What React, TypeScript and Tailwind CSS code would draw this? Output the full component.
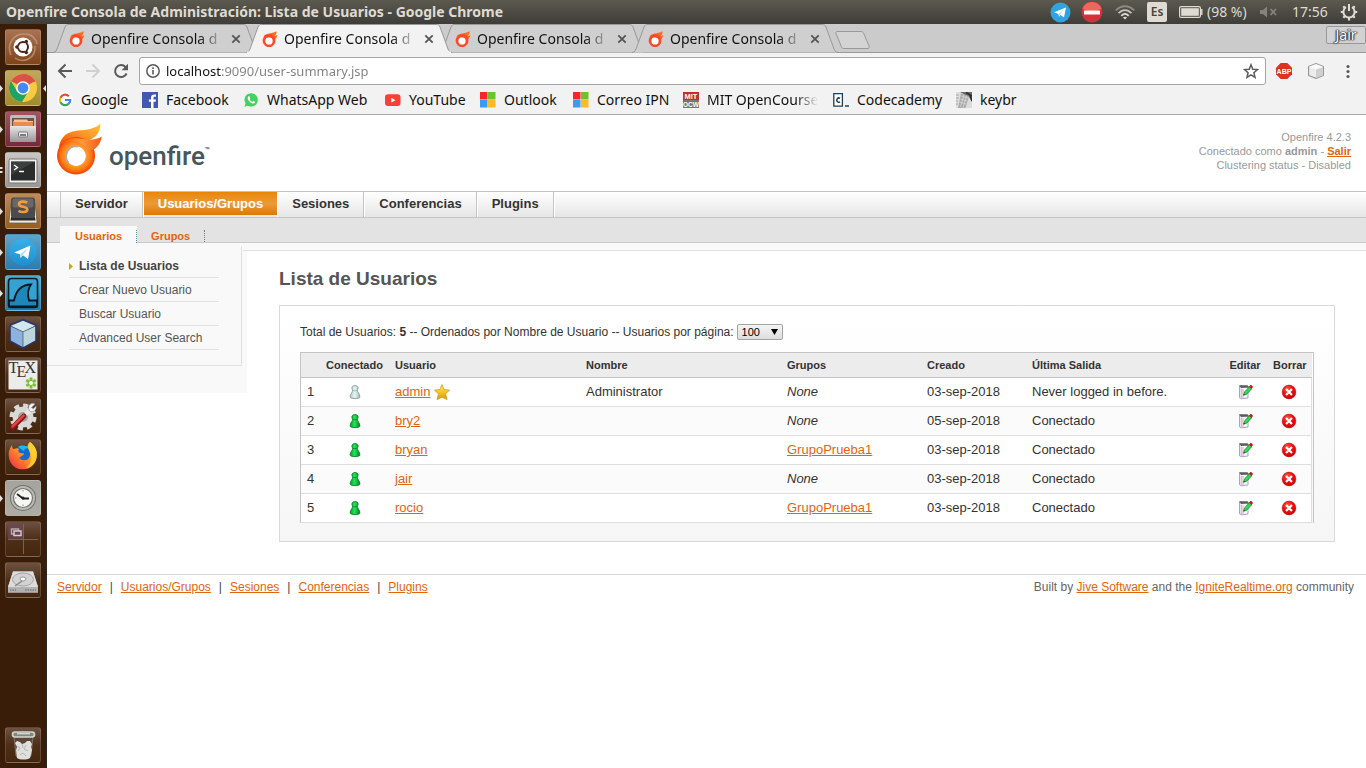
import type { ReactNode } from "react";

const UI = "font-['Noto_Sans',sans-serif]";

function Defs() {
  return (
    <svg className="absolute h-0 w-0" aria-hidden="true">
      <defs>
        <radialGradient id="fire" cx="0.5" cy="0.5" r="0.52">
          <stop offset="0.45" stopColor="#ffa63a" />
          <stop offset="0.75" stopColor="#ff7a14" />
          <stop offset="1" stopColor="#ee3600" />
        </radialGradient>
        <linearGradient id="flame" x1="0" y1="1" x2="1" y2="0">
          <stop offset="0" stopColor="#f24a00" />
          <stop offset="0.55" stopColor="#ff9226" />
          <stop offset="1" stopColor="#ffc62e" />
        </linearGradient>
        <linearGradient id="flameLow" x1="0" y1="0" x2="1" y2="0">
          <stop offset="0" stopColor="#ff5a0c" />
          <stop offset="0.5" stopColor="#ff9a3a" />
          <stop offset="1" stopColor="#f4581a" />
        </linearGradient>
        <linearGradient id="pawnOn" x1="0" x2="1">
          <stop offset="0" stopColor="#0b9a2c" />
          <stop offset="0.45" stopColor="#22e457" />
          <stop offset="1" stopColor="#088424" />
        </linearGradient>
        <linearGradient id="pawnOff" x1="0" x2="1">
          <stop offset="0" stopColor="#b4cccc" />
          <stop offset="0.5" stopColor="#e4f6f6" />
          <stop offset="1" stopColor="#a4b6b6" />
        </linearGradient>
        <linearGradient id="gold" x1="0" y1="0" x2="0" y2="1">
          <stop offset="0" stopColor="#ffef7a" />
          <stop offset="0.5" stopColor="#f4c522" />
          <stop offset="1" stopColor="#d89a10" />
        </linearGradient>
        <radialGradient id="redBall" cx="0.4" cy="0.3" r="0.75">
          <stop offset="0" stopColor="#ff5a4a" />
          <stop offset="0.5" stopColor="#f60c0c" />
          <stop offset="1" stopColor="#c80000" />
        </radialGradient>
        <linearGradient id="metal" x1="0" y1="0" x2="0" y2="1">
          <stop offset="0" stopColor="#e6e6e6" />
          <stop offset="1" stopColor="#969696" />
        </linearGradient>
        <linearGradient id="foxTail" x1="1" y1="0" x2="0" y2="1">
          <stop offset="0" stopColor="#ffe53b" />
          <stop offset="0.45" stopColor="#ff9a1f" />
          <stop offset="1" stopColor="#f0234f" />
        </linearGradient>
        <linearGradient id="tgBlue" x1="0" y1="0" x2="0" y2="1">
          <stop offset="0" stopColor="#38b0e8" />
          <stop offset="1" stopColor="#1f8fd0" />
        </linearGradient>
      </defs>
    </svg>
  );
}

/* ---------- system bar ---------- */

function SystemBar() {
  return (
    <header className={`${UI} flex h-6 items-center justify-between bg-linear-to-b from-[#5c594f] to-[#3e3d38] pr-2 pl-1.5 text-[#dfdbd2]`}>
      <h1 className="text-[14px] leading-6 font-bold">Openfire Consola de Administración: Lista de Usuarios - Google Chrome</h1>
      <div className="flex items-center text-[14px] leading-6">
        <svg className="mr-2.5 size-[21px]" viewBox="0 0 21 21" aria-hidden="true">
          <circle cx="10.500" cy="10.500" r="10" fill="#2ca5e0" />
          <path d="M4 10.300 16 5.600 14 15.500 10.600 13 9 14.800 8.500 11.900Z" fill="#fff" />
          <path d="M8.500 11.900 14 7.600 9.800 12.500 9 14.800Z" fill="#b8dcf0" />
        </svg>
        <svg className="mr-3 size-[22px]" viewBox="0 0 22 22" aria-hidden="true">
          <circle cx="11" cy="11" r="10.500" fill="#d6303a" />
          <path d="M1.500 8a10 10 0 0 1 19 0c-6 2-13 2-19 0Z" fill="#ef7d68" opacity="0.75" />
          <rect x="3" y="9.500" width="16" height="4" fill="#fff" />
        </svg>
        <svg className="mr-3 h-[15px] w-5" viewBox="0 0 20 15" fill="none" strokeWidth="1.800" aria-hidden="true">
          <path d="M.8 5.500C6-.2 14-.2 19.200 5.500" stroke="#8d8a82" />
          <path d="M3.600 8.200C7.500 4 12.500 4 16.400 8.200" stroke="#c8c4bb" />
          <path d="M6.300 10.800c2.400-2.500 5-2.500 7.400 0" stroke="#dfdbd2" />
          <path d="M8 12.600c1.300-1.300 2.700-1.300 4 0L10 14.600Z" fill="#dfdbd2" />
        </svg>
        <span className="mr-3 flex size-5 items-center justify-center rounded-[2px] bg-[#dfdbd2] text-[12px] font-semibold text-[#45443e]">Es</span>
        <svg className="mr-1 h-3 w-6" viewBox="0 0 24 12" fill="none" aria-hidden="true">
          <rect x=".6" y=".6" width="20.800" height="10.800" rx="1.500" stroke="#dfdbd2" strokeWidth="1.200" />
          <rect x="2.200" y="2.200" width="17.600" height="7.600" fill="#dfdbd2" />
          <path d="M22.800 3v6" stroke="#dfdbd2" strokeWidth="1.400" />
        </svg>
        <span className="w-[52px] whitespace-nowrap">(98 %)</span>
        <svg className="mr-3.5 h-3 w-[19px]" viewBox="0 0 19 12" fill="#86837a" aria-hidden="true">
          <path d="M1 4h3l4-3.500v11L4 8H1Z" />
          <path d="m11.500 3 5.500 6M17 3l-5.500 6" stroke="#86837a" strokeWidth="1.800" />
        </svg>
        <time className="w-12">17:56</time>
        <svg className="size-[18px]" viewBox="0 0 18 18" fill="none" stroke="#dfdbd2" aria-hidden="true">
          <path d="M6 4.200a5.600 5.600 0 1 0 6 0" strokeWidth="2" />
          <path d="M9 1v7" strokeWidth="2" />
          <path d="M3.300 3.300l1.800 1.800M14.700 3.300l-1.800 1.800M.8 9h2.600M17.200 9h-2.600M3.300 14.700l1.800-1.800M14.700 14.700l-1.800-1.800M9 17.500v-3" strokeWidth="2.200" />
        </svg>
      </div>
    </header>
  );
}

/* ---------- launcher ---------- */

type Launcher = { name: string; tile: string; running?: number; active?: boolean; art: ReactNode };

const plain = "bg-linear-to-b from-[#6d5240] via-[#4d2f18] to-[#45260d]";

const launchers: Launcher[] = [
  {
    name: "Ubuntu",
    tile: "bg-linear-to-b from-[#a87354] to-[#7f4518]",
    art: (
      <>
        <path d="M6 26C1 15 9 4 20 5c7 0 11 5 12 10M10 29c9 6 21 0 20-12" fill="none" stroke="#d2ab92" strokeWidth="1.500" opacity="0.6" />
        <circle cx="18" cy="18" r="9.500" fill="#fff" />
        <circle cx="18" cy="18" r="5" fill="none" stroke="#4a2414" strokeWidth="2" />
        <path d="M18 18h-8M18 18l4-7M18 18l4 7" stroke="#fff" strokeWidth="1" />
        <circle cx="11.800" cy="18" r="1.700" fill="#4a2414" />
        <circle cx="21.300" cy="12.500" r="1.700" fill="#4a2414" />
        <circle cx="21.300" cy="23.500" r="1.700" fill="#4a2414" />
      </>
    ),
  },
  {
    name: "Google Chrome",
    tile: "bg-linear-to-b from-[#c0a95e] to-[#a08b2c]",
    running: 1,
    active: true,
    art: (
      <>
        <circle cx="18" cy="18" r="14" fill="#f7cb3f" />
        <path d="M18 18 5.900 11A14 14 0 0 1 30.100 11Z" fill="#dd5144" />
        <path d="M18 4A14 14 0 0 1 30.500 11.700H18Z" fill="#dd5144" />
        <path d="M5.900 11A14 14 0 0 0 17 32L23.500 21 12 21Z" fill="#1da362" />
        <circle cx="18" cy="18" r="6.800" fill="#fff" />
        <circle cx="18" cy="18" r="5.400" fill="#4587f3" />
      </>
    ),
  },
  {
    name: "Archivos",
    tile: "bg-linear-to-b from-[#a05560] to-[#782838]",
    running: 1,
    art: (
      <>
        <rect x="5" y="4" width="26" height="27" rx="2" fill="#bdbdbd" />
        <rect x="7" y="7" width="22" height="8" fill="#6b5148" />
        <path d="M8 10h20v5H8Z" fill="#ed8b4b" />
        <path d="M9 8.500h13l1 1.500h5v1H9Z" fill="#ffc193" />
        <rect x="5" y="15" width="26" height="16" rx="1" fill="url(#metal)" />
        <rect x="13.500" y="21" width="9" height="5" rx="1" fill="#eee" stroke="#777" />
        <path d="M15 24h6" stroke="#555" strokeWidth="1.500" />
      </>
    ),
  },
  {
    name: "Terminal",
    tile: "bg-linear-to-b from-[#c9c6c3] to-[#9a9793]",
    running: 2,
    art: (
      <>
        <rect x="4" y="7" width="28" height="24" rx="1.500" fill="#efefef" stroke="#777" />
        <rect x="6" y="9.500" width="24" height="19" fill="#2a2c2b" />
        <path d="M6 9.500h24L6 23Z" fill="#4a4c4b" opacity="0.6" />
        <path d="m9 13 3.500 2.500L9 18M14 19.500h5" stroke="#fff" strokeWidth="1.400" fill="none" />
      </>
    ),
  },
  {
    name: "Sublime Text",
    tile: "bg-linear-to-b from-[#bd8a5b] to-[#95601f]",
    running: 1,
    art: (
      <>
        <path d="M6 10h24l2 18.500c0 1-.5 1.500-1.500 1.500h-25C4.500 30 4 29.500 4 28.500Z" fill="#efe9e2" stroke="#6d5a48" strokeWidth=".8" />
        <path d="M6 24h24l.5 3.500h-25Z" fill="#2c2c2c" />
        <rect x="6" y="4.500" width="24" height="20.500" rx="2.500" fill="#4b4b4b" />
        <rect x="7.500" y="5.500" width="21" height="9" rx="2" fill="#686868" />
        <path d="M22.300 9.700c-3-1.700-8.300-1.600-8.300 1.500 0 3.300 8.300 2 8.300 5.300 0 3.100-6 3.100-8.800 1.400" fill="none" stroke="#f59a3a" strokeWidth="2.600" />
      </>
    ),
  },
  {
    name: "Telegram",
    tile: "bg-linear-to-b from-[#5fa3c8] to-[#2b7cae]",
    running: 1,
    art: (
      <>
        <circle cx="18" cy="18" r="13.500" fill="url(#tgBlue)" />
        <path d="M9 18.500 25.500 11.500 23 25 17.800 21.300 15.600 24 15 20.300Z" fill="#fff" />
        <path d="m15 20.300 8-6.300-5.200 7.300-2.200 2.700Z" fill="#bcdcee" />
      </>
    ),
  },
  {
    name: "Wireshark",
    tile: "bg-linear-to-b from-[#4faed6] to-[#1b7cae]",
    running: 1,
    art: (
      <>
        <rect x="3.500" y="3.500" width="29" height="29" rx="3" fill="#35a2d2" stroke="#0d1c26" strokeWidth="1.600" />
        <path d="M4 25.500h5C11 15 16 9.800 26 9.500c-3.500 4.500-3.500 10-2 16h8v6H4Z" fill="#1f86ba" stroke="#0b1820" strokeWidth="1.800" />
      </>
    ),
  },
  {
    name: "VirtualBox",
    tile: plain,
    art: (
      <>
        <path d="M18 4 30.500 9.500V25L18 32 5.500 25V9.500Z" fill="#26407f" stroke="#24357c" strokeWidth="2.500" strokeLinejoin="round" opacity="0.8" />
        <path d="M18 4.800 30 9.800 18 15.500 6 9.800Z" fill="#d3e8ec" />
        <path d="M5.800 10.500 17.700 16v15l-11.900-6.500Z" fill="#8fb2dc" />
        <path d="M30.200 10.500 18.300 16v15l11.900-6.500Z" fill="#bcd6dc" />
      </>
    ),
  },
  {
    name: "TeXstudio",
    tile: plain,
    art: (
      <>
        <rect x="3.500" y="3.500" width="29" height="29" fill="#ececec" />
        <g fill="#333" fontFamily="Liberation Serif, serif" fontSize="16">
          <text x="3.500" y="15.500">T</text>
          <text x="11.500" y="20">E</text>
          <text x="19.500" y="15.500">X</text>
        </g>
        <circle cx="26" cy="26" r="5.500" fill="#d4e8b8" />
        <path d="M26 20.500v11M21.300 23.200l9.400 5.600M30.700 23.200l-9.400 5.600" stroke="#80bc3c" strokeWidth="2.600" />
        <circle cx="26" cy="26" r="2" fill="#fff" />
      </>
    ),
  },
  {
    name: "Configuración",
    tile: plain,
    art: (
      <>
        <circle cx="18" cy="19" r="10.500" fill="#d9d9d6" />
        <circle cx="18" cy="19" r="11.500" fill="none" stroke="#d9d9d6" strokeWidth="4" strokeDasharray="5 4" />
        <circle cx="18" cy="19" r="5" fill="#a5a29e" />
        <path d="M17 20 26 11" stroke="#e9e9e9" strokeWidth="4" />
        <path d="M24 12c-2-5 3-8 6-6l-3.500 3.500 1.500 1.700L31 8c1 4-3 7-6.500 5Z" fill="#f4f4f4" stroke="#888" strokeWidth=".6" />
        <path d="M7.500 29.500 19 18" stroke="#8e1717" strokeWidth="5" strokeLinecap="round" />
        <path d="M7.500 28.500 18.500 17.700" stroke="#e14545" strokeWidth="2.500" strokeLinecap="round" />
      </>
    ),
  },
  {
    name: "Firefox",
    tile: plain,
    art: (
      <>
        <circle cx="19" cy="17" r="10.500" fill="#1769d2" />
        <path d="M13 8c3-2 8-2 11 1-3 0-5 1-5 3Z" fill="#27b4f2" />
        <path d="M7 6c0 3 1 4 2 4 2-1 4-1 5 0-1 2-1 3 1 4l4 .5c0 2-4 3-4.500 4.500 2 3 8 3 9.500 0 2-3 1-7-1-9.500-1-3 0-5 2-6.500 5 4 8 9 6.500 16A14 14 0 0 1 4 19C3 14 4 10 7 6Z" fill="url(#foxTail)" />
        <path d="M25 3c5 4 8 9 6.500 16C30 25 26 29 21 29c5-4 7-10 3-18-1-3-1-6 1-8Z" fill="#ffd42e" opacity="0.75" />
      </>
    ),
  },
  {
    name: "Reloj",
    tile: "bg-linear-to-b from-[#a5a39d] to-[#aeaca4]",
    running: 1,
    art: (
      <>
        <circle cx="18" cy="18" r="13" fill="#6f716c" />
        <circle cx="18" cy="18" r="12" fill="#babcb6" />
        <circle cx="18" cy="18" r="9.500" fill="#f6f6f2" stroke="#73756f" strokeWidth="1.200" />
        <path d="m12 14 6 4.500h6" fill="none" stroke="#222" strokeWidth="1.800" />
        <circle cx="18" cy="18" r="1.500" fill="#222" />
        <path d="M18 10v1.500M18 24.500V26M10 18h1.500" stroke="#888" />
      </>
    ),
  },
  {
    name: "Áreas de trabajo",
    tile: plain,
    art: (
      <>
        <rect x="3" y="3" width="15" height="15" fill="#6a4657" opacity="0.7" />
        <path d="M18.500 3v30M3 18.500h30" stroke="#7b6252" strokeWidth="1" />
        <path d="M6.500 8h7v5h-7Z" fill="none" stroke="#b7a8ad" strokeWidth="1.400" />
        <path d="M9 10h7v4.500H9Z" fill="#6a4657" stroke="#d8cdd0" strokeWidth="1.400" />
      </>
    ),
  },
  {
    name: "Disco",
    tile: plain,
    art: (
      <>
        <path d="M8 9.500h20L33 25v5.500H3V25Z" fill="#c6c6c6" />
        <path d="M8 9.500h20L33 25H3Z" fill="#dcdcdc" />
        <ellipse cx="18" cy="17.500" rx="10.500" ry="6.500" fill="#d2d2d2" stroke="#a5a5a5" />
        <ellipse cx="18" cy="17" rx="3" ry="2" fill="#fff" stroke="#999" />
        <path d="m10 24 7-5" stroke="#888" strokeWidth="1.500" />
        <path d="M3 25h30v5.500H3Z" fill="#b1b1b1" />
        <path d="M20 28h11M5 28h6" stroke="#7d7d7d" strokeWidth="1.500" strokeDasharray="1.500 1" />
      </>
    ),
  },
];

const trash: Launcher = {
  name: "Papelera",
  tile: plain,
  art: (
    <>
      <path d="M9 9h19l-2 20a8 3 0 0 1-15 0Z" fill="#5c4536" stroke="#8d7d72" strokeWidth=".8" />
      <path d="m10 16 2-2 3 1 2 2 3-1 2-2 3 0 2 3-1 3 1 3-2 8c-3 2-10 2-13 0l-1-8 1-3Z" fill="#dfe0dd" />
      <path d="m12 19 3 2-2 3M21 18l-2 4 4 2M15 28l3-2 3 3M17 17l1 4" fill="none" stroke="#b4b6b2" />
      <rect x="7.500" y="5" width="22" height="5" rx="2.500" fill="#84867e" stroke="#d3d6cf" strokeWidth="1.600" />
      <path d="M12 6.800h13" stroke="#f2f4ef" strokeWidth="1" />
    </>
  ),
};

function LauncherTile({ item }: { item: Launcher }) {
  return (
    <button type="button" aria-label={item.name} className="relative flex w-full justify-center">
      <span className={`block size-9 overflow-hidden rounded-[3px] border border-white/15 ${item.tile}`}>
        <svg className="-m-px block size-9" viewBox="0 0 36 36" aria-hidden="true">
          {item.art}
        </svg>
      </span>
      {item.running === 1 && (
        <svg className="absolute top-[15px] left-0 h-[7px] w-[3px]" viewBox="0 0 3 7" aria-hidden="true">
          <path d="M0 0 3 3.500 0 7Z" fill="#e5e2de" />
        </svg>
      )}
      {item.running === 2 && (
        <svg className="absolute top-[15px] left-0 h-[6px] w-[3px]" viewBox="0 0 3 6" aria-hidden="true">
          <path d="M0 0h2l1 1-1 1H0ZM0 4h2l1 1-1 1H0Z" fill="#e5e2de" />
        </svg>
      )}
      {item.active && (
        <svg className="absolute top-[15px] right-0 h-[7px] w-[3px]" viewBox="0 0 3 7" aria-hidden="true">
          <path d="M3 0 0 3.500 3 7Z" fill="#e5e2de" />
        </svg>
      )}
    </button>
  );
}

/* ---------- browser chrome ---------- */

function OpenfireFavicon() {
  return (
    <svg className="size-4 shrink-0" viewBox="0 0 16 16" aria-hidden="true">
      <path d="M1.500 5.500C4 1.500 9 3.500 14.500.3 14.800 2.500 14 4 12.500 5c1 0 2-.4 2.800-1-.2 2-1 3.300-2.300 4.200L8 7Z" fill="#ff6a22" />
      <path fillRule="evenodd" d="M7 3.200a6.400 6.400 0 1 0 .1 0ZM7 6.300A3.600 3.600 0 1 1 7 13.500 3.600 3.600 0 0 1 7 6.300Z" fill="#fb4a2a" />
      <circle cx="7" cy="9.900" r="3.400" fill="#fff" />
    </svg>
  );
}

function BrowserTab({ active = false }: { active?: boolean }) {
  return (
    <div className={`relative -mr-[13px] flex h-[29px] w-[206px] items-center pr-4 pl-4 ${active ? "z-10" : ""}`}>
      <svg className="absolute inset-0 h-[29px] w-[206px]" viewBox="0 0 206 29" aria-hidden="true">
        <path d="M0 28.500C3 28 3 27 4 25L12 3C13 1 14 .5 15 .5H190C192 .5 193 1 194 3L202 25C203 27 203.500 28 206 28.500" fill={active ? "#f2f2f2" : "#cfcfcf"} stroke="#999" />
        {active && <path d="M1 28.500h204" stroke="#f2f2f2" strokeWidth="2" />}
      </svg>
      <div className="relative flex w-full items-center">
        <OpenfireFavicon />
        <a href="#tab" className="ml-1.5 w-[134px] mask-r-from-80% mask-r-to-100% text-[14px] leading-5 whitespace-nowrap text-[#111]">
          Openfire Consola d
        </a>
        <button type="button" aria-label="Cerrar pestaña" className="ml-1.5 flex size-2.5 items-center justify-center">
          <svg className="size-2.5" viewBox="0 0 10 10" aria-hidden="true">
            <path d="m1.300 1.300 7.400 7.400M8.700 1.300 1.300 8.700" stroke="#555" strokeWidth="1.800" />
          </svg>
        </button>
      </div>
    </div>
  );
}

function TabStrip() {
  return (
    <div className="relative flex h-[29px] justify-between border-b border-[#999] bg-[#cbcbcb]">
      <div className="flex pl-1.5">
        <BrowserTab />
        <BrowserTab active />
        <BrowserTab />
        <BrowserTab />
        <button type="button" aria-label="Pestaña nueva" className="mt-[7px] ml-2.5 h-[18px] w-[35px]">
          <svg className="h-[18px] w-[35px]" viewBox="0 0 35 18" aria-hidden="true">
            <path d="M2 .5H26C27 .5 28 1 28.500 2L34 15C34.500 16.500 34 17.500 33 17.500H9C7.500 17.500 7 17 6.500 16L1 2.500C.6 1.200 1 .5 2 .5Z" fill="#d4d4d4" stroke="#999" />
          </svg>
        </button>
      </div>
      <button type="button" className="mt-0.5 h-[18px] w-10 rounded-[2px] border border-[#999] bg-[#d2d2d2] text-[14px] leading-4 text-white [text-shadow:0_0_1px_#222,0_0_2px_#333,1px_0_1px_#444,-1px_0_1px_#444]">
        Jair
      </button>
    </div>
  );
}

function Toolbar() {
  return (
    <div className="flex items-center gap-3 pt-1 pr-2.5 pl-2.5 text-[#555]">
      <button type="button" aria-label="Atrás">
        <svg className="size-4" viewBox="0 0 16 16" fill="none" stroke="#5a5a5a" strokeWidth="2" aria-hidden="true">
          <path d="M15 8H2M8.500 1.500 2 8l6.500 6.500" />
        </svg>
      </button>
      <button type="button" aria-label="Adelante">
        <svg className="size-4" viewBox="0 0 16 16" fill="none" stroke="#d0d0d0" strokeWidth="2" aria-hidden="true">
          <path d="M1 8h13M7.500 1.500 14 8l-6.500 6.500" />
        </svg>
      </button>
      <button type="button" aria-label="Recargar">
        <svg className="size-4" viewBox="0 0 16 16" fill="none" stroke="#5a5a5a" strokeWidth="2" aria-hidden="true">
          <path d="M13.600 10.500A6 6 0 1 1 12.500 4L14 5.500" />
          <path d="M15 .8v6.400H8.600Z" fill="#5a5a5a" stroke="none" />
        </svg>
      </button>
      <div className="-ml-0.5 flex h-7 min-w-0 flex-1 items-center rounded-[3px] border border-[#a5a5a5] bg-white pr-1.5 pl-1.5">
        <svg className="size-3.5 shrink-0" viewBox="0 0 14 14" fill="none" stroke="#5a5a5a" aria-hidden="true">
          <circle cx="7" cy="7" r="6.200" strokeWidth="1.500" />
          <path d="M7 6v4.500M7 3.300v1.600" strokeWidth="1.600" />
        </svg>
        <input
          aria-label="Dirección"
          defaultValue="localhost:9090/user-summary.jsp"
          className="ml-1.5 h-6 min-w-0 flex-1 bg-[linear-gradient(90deg,#111_55px,#808080_55px)] bg-clip-text text-[13px] text-transparent outline-none"
        />
        <button type="button" aria-label="Añadir a marcadores">
          <svg className="size-4" viewBox="0 0 16 16" fill="none" stroke="#5a5a5a" strokeWidth="1.500" aria-hidden="true">
            <path d="m8 1.800 1.800 4.400 4.700.4-3.600 3.100 1.100 4.600L8 11.800l-4 2.500 1.100-4.600L1.500 6.600l4.700-.4Z" />
          </svg>
        </button>
      </div>
      <button type="button" aria-label="ABP" className="-ml-0.5">
        <svg className="size-4" viewBox="0 0 16 16" aria-hidden="true">
          <path d="M4.700 0h6.600L16 4.700v6.600L11.300 16H4.700L0 11.300V4.700Z" fill="#dc3224" />
          <text x="8" y="10.800" textAnchor="middle" fontFamily="Liberation Sans, sans-serif" fontWeight="700" fontSize="7" fill="#fff">ABP</text>
        </svg>
      </button>
      <button type="button" aria-label="Extensión" className="ml-1">
        <svg className="size-4" viewBox="0 0 16 16" strokeLinejoin="round" aria-hidden="true">
          <path d="M8 .6 15.400 3.500v9L8 15.400.6 12.500v-9Z" fill="#ececec" stroke="#9a9a9a" strokeWidth="1.200" />
          <path d="M8 6.500 15 4v8.300L8 15Z" fill="#cfcfcf" />
          <path d="M1 3.800 8 1l7 2.800-7 2.700Z" fill="#fafafa" />
        </svg>
      </button>
      <button type="button" aria-label="Menú" className="ml-1">
        <svg className="size-4" viewBox="0 0 16 16" fill="#5a5a5a" aria-hidden="true">
          <circle cx="8" cy="3.500" r="1.600" />
          <circle cx="8" cy="8.500" r="1.600" />
          <circle cx="8" cy="13.500" r="1.600" />
        </svg>
      </button>
    </div>
  );
}

const windowsLogo = (
  <>
    <path d="M0 0h7.500v7.500H0Z" fill="#f8242c" />
    <path d="M8 0h7.500v7.500H8Z" fill="#6bc52a" />
    <path d="M0 8h7.500v7.500H0Z" fill="#3a9bf0" />
    <path d="M8 8h7.500v7.500H8Z" fill="#ffba28" />
  </>
);

const bookmarks: { label: string; width: string; fade?: boolean; art: ReactNode }[] = [
  {
    label: "Google",
    width: "w-[85px]",
    art: (
      <>
        <circle cx="8" cy="8" r="8" fill="#fff" />
        <g fill="none" strokeWidth="2.200">
          <path d="M11.800 4.200A5.200 5.200 0 0 0 3.400 5.700" stroke="#ea4335" />
          <path d="M3.400 5.700a5.200 5.200 0 0 0 0 4.600" stroke="#fbbc05" />
          <path d="M3.400 10.300a5.200 5.200 0 0 0 8.100 1.600" stroke="#34a853" />
          <path d="M11.500 11.900A5.200 5.200 0 0 0 13.200 8H8" stroke="#4285f4" />
        </g>
      </>
    ),
  },
  {
    label: "Facebook",
    width: "w-[101px]",
    art: (
      <>
        <path d="M0 0h16v16H0Z" fill="#4257b2" />
        <path d="M9 16V9.800H6.900V7.400H9V5.700C9 3.600 10.300 2.500 12.200 2.500h1.800v2.200h-1.200c-1 0-1.300.5-1.300 1.300v1.400H14l-.4 2.400h-2.100V16Z" fill="#fff" />
      </>
    ),
  },
  {
    label: "WhatsApp Web",
    width: "w-[142px]",
    art: (
      <>
        <path d="M8.200.7a7.200 7.200 0 1 1-3.400 13.600L.7 15.500 2 11.600A7.200 7.200 0 0 1 8.200.7Z" fill="#44d062" stroke="#fff" strokeWidth=".8" />
        <path d="M5.600 4.200c-1.700 1.300-1 3.600 1 5.500s4.300 2.500 5.400.9c.3-.6.100-.9-.4-1.200l-1.300-.6-.9 1C8.300 9.400 7 8.200 6.600 7.200l.7-.9-.6-1.600c-.3-.5-.7-.7-1.100-.5Z" fill="#fff" />
      </>
    ),
  },
  {
    label: "YouTube",
    width: "w-[95px]",
    art: (
      <>
        <rect x="0" y="2.300" width="15.500" height="11.700" rx="3" fill="#fc4034" />
        <path d="m6.300 5.800 4.200 2.400-4.200 2.300Z" fill="#fff" />
      </>
    ),
  },
  { label: "Outlook", width: "w-[93px]", art: windowsLogo },
  { label: "Correo IPN", width: "w-[110px]", art: windowsLogo },
  {
    label: "MIT OpenCourse",
    width: "w-[150px]",
    fade: true,
    art: (
      <>
        <path d="M0 0h16v8H0Z" fill="#c3311f" />
        <path d="M0 8h16v8H0Z" fill="#77776c" />
        <g fontFamily="Liberation Sans, sans-serif" fontWeight="700" fill="#fff" textAnchor="middle">
          <text x="8" y="6.900" fontSize="7.500">MIT</text>
          <text x="8" y="14.700" fontSize="6.500">OCW</text>
        </g>
      </>
    ),
  },
  {
    label: "Codecademy",
    width: "w-[123px]",
    art: (
      <>
        <path d="M.8 1.600h8.600v12.500H.8Z" fill="#fff" stroke="#1f4056" strokeWidth="1.300" />
        <path d="M7 6.300a2.100 2.100 0 1 0 0 3.500" fill="none" stroke="#1f4056" strokeWidth="1.500" />
        <path d="M12 14h4" stroke="#1f4056" strokeWidth="1.500" />
      </>
    ),
  },
  {
    label: "keybr",
    width: "w-[70px]",
    art: (
      <>
        <path d="M0 0h16v16H0Z" fill="#dcdcdc" />
        <path d="M4 0h12v10l-3-5Z" fill="#6a6a6a" />
        <path d="m5 1.500 8 2.500-3.500 12H2Z" fill="#aaa" />
        <path d="m5.500 4 6.500 2M4.500 7l6.500 2M3.500 10l6.500 2M8 3 4.500 15M10.500 4 7 16" stroke="#dedede" strokeWidth=".7" />
        <path d="M0 3h3M0 6h3M0 9h2M0 12h2" stroke="#999" strokeWidth=".8" />
        <path d="m10 .5 6 3.500M14 3l2 6" stroke="#2a2a2a" strokeWidth="1.500" />
      </>
    ),
  },
];

function BookmarksBar() {
  return (
    <nav aria-label="Marcadores" className="flex h-[29px] items-center pl-2.5">
      {bookmarks.map((b) => (
        <a key={b.label} href="#marcador" className={`flex shrink-0 items-center gap-2 text-[14px] leading-5 text-[#111] ${b.width}`}>
          <svg className="size-4 shrink-0" viewBox="0 0 16 16" aria-hidden="true">
            {b.art}
          </svg>
          <span className={b.fade ? "mask-r-from-80% mask-r-to-100% whitespace-nowrap" : "whitespace-nowrap"}>{b.label}</span>
        </a>
      ))}
    </nav>
  );
}

/* ---------- openfire console ---------- */

const link = "text-[#e2650c] underline";

function Logo() {
  return (
    <a href="#inicio" aria-label="openfire" className="flex">
      <svg className="h-[52px] w-[46px]" viewBox="0 0 46 52" aria-hidden="true">
        <path d="M2 24C5 8 17 8 27 7 34 6.300 40 4 43.500.5 43.500 8 40 14 32 17L22 20Z" fill="url(#flame)" />
        <path fillRule="evenodd" d="M19 14a19 18.700 0 1 0 .1 0ZM19 23.500a9.700 9.700 0 1 1-.1 0Z" fill="url(#fire)" />
        <path d="M5 21C11 13 22 15.500 30 16.500c6 .3 11-.5 14.800-3C43.500 22 38 27.500 32 28 26 20 15 15 5 21Z" fill="url(#flameLow)" />
        <circle cx="19" cy="33.200" r="9.500" fill="#fff" />
        <path d="M11.500 39.500A9.700 9.700 0 0 1 21 23.800" fill="none" stroke="#aaa" strokeWidth="1.600" />
      </svg>
      <span className="mt-[17px] ml-1.5 font-[Roboto,sans-serif] text-[26px] leading-8 font-medium text-[#47565c]">openfire</span>
      <span className="mt-[22px] font-[Roboto,sans-serif] text-[8px] leading-3 font-medium text-[#47565c]">™</span>
    </a>
  );
}

const sections = ["Servidor", "Usuarios/Grupos", "Sesiones", "Conferencias", "Plugins"];

function MainNav() {
  return (
    <nav aria-label="Secciones" className="flex h-[27px] border-y border-[#c4c4c4] bg-linear-to-b from-white to-[#e6e6e6] pl-[13px] text-[13px] leading-[23px] font-bold">
      <ul className="flex border-l border-[#c9c9c9]">
        {sections.map((s) =>
          s === "Usuarios/Grupos" ? (
            <li key={s} className="flex border-r border-white">
              <a href="#usuarios" aria-current="page" className="h-[23px] bg-linear-to-b from-[#e88600] via-[#ec9a34] to-[#dc7a00] px-3.5 text-white">
                {s}
              </a>
            </li>
          ) : (
            <li key={s} className="flex border-r border-white">
              <a href="#seccion" className="border-r border-[#c4c4c4] px-3.5 text-[#333]">
                {s}
              </a>
            </li>
          ),
        )}
      </ul>
    </nav>
  );
}

function SubNav() {
  return (
    <nav aria-label="Subsecciones" className="flex h-[25px] items-end border-b border-[#cacaca] bg-[#e3e3e3] pl-[13px] text-[11px] leading-3 font-bold text-[#e2650c]">
      <a href="#usuarios" aria-current="page" className="-mb-px flex bg-[#f9f9f9] pt-1 pl-[15px]">
        <span className="border-r border-dotted border-[#5b8a9a] pr-3.5 pb-px">Usuarios</span>
      </a>
      <a href="#grupos" className="border-r border-dotted border-[#777] px-3.5">
        Grupos
      </a>
    </nav>
  );
}

const menu = ["Lista de Usuarios", "Crear Nuevo Usuario", "Buscar Usuario", "Advanced User Search"];

function Sidebar() {
  return (
    <aside className="w-[200px] shrink-0 self-start bg-[#f9f9f9] pt-[3px] pb-[27px]">
      <ul className="mr-[5px] border-r border-b border-[#e1e1e1] pt-2 pr-[22px] pb-[15px] pl-[22px] text-[12px] leading-[21px]">
        {menu.map((m, i) => (
          <li key={m} className="flex items-center border-b border-[#e1e1e1] pt-0.5">
            <span className="w-2.5">
              {i === 0 && (
                <svg className="h-[7px] w-1" viewBox="0 0 4 7" aria-hidden="true">
                  <path d="M0 0 4 3.500 0 7Z" fill="#d8a400" />
                </svg>
              )}
            </span>
            <a href="#menu" className={i === 0 ? "font-bold text-[#444]" : "text-[#555]"}>
              {m}
            </a>
          </li>
        ))}
      </ul>
    </aside>
  );
}

function Pawn({ online }: { online: boolean }) {
  return (
    <svg className="mx-auto h-3.5 w-3" viewBox="0 0 12 14" role="img" aria-label={online ? "Conectado" : "Desconectado"}>
      <path
        d="M6 .6C8 .6 9.100 1.700 9.100 3.100 9.100 4 8.700 4.600 8.200 5 8.300 7.500 10.900 8.800 10.900 12 10.900 13.200 8.500 13.500 6 13.500S1.100 13.200 1.100 12C1.100 8.800 3.700 7.500 3.800 5 3.300 4.600 2.900 4 2.900 3.100 2.900 1.700 4 .6 6 .6Z"
        fill={online ? "url(#pawnOn)" : "url(#pawnOff)"}
        stroke={online ? "#07802a" : "#8a9696"}
        strokeWidth=".9"
      />
      <path d="M3.800 5.200c1 .7 3.400.7 4.400 0" fill="none" stroke={online ? "#07802a" : "#9aa8a8"} strokeWidth=".8" />
    </svg>
  );
}

function EditIcon() {
  return (
    <svg className="size-4" viewBox="0 0 16 16" aria-hidden="true">
      <path d="m2.500 2 8.500 1v11l-6.500.8-2-1Z" fill="#f6f6ff" stroke="#9a9ac8" strokeWidth=".9" />
      <path d="M2 1.200h8.500l2 2.200-8.500.6Z" fill="#5c5c5c" />
      <path d="M6 5v9.500" stroke="#f2a0a0" />
      <path d="M4.200 4.500v10" stroke="#b0b0d6" />
      <path d="m6.600 11.200 1-3.300 4.700-5 2.200 2-4.800 5.300Z" fill="#2fdc50" stroke="#128a2a" strokeWidth=".8" />
      <path d="m6.400 11.500.5-1.700 1.200 1Z" fill="#333" />
      <path d="m12.400 2.600.9-1.100c.8-.6 2.500.9 2 1.900l-.8 1.200Z" fill="#e01818" stroke="#b30d0d" strokeWidth=".8" />
    </svg>
  );
}

function DeleteIcon() {
  return (
    <svg className="size-4" viewBox="0 0 16 16" aria-hidden="true">
      <circle cx="8" cy="8" r="6.900" fill="url(#redBall)" stroke="#b00606" strokeWidth=".5" />
      <path d="m5.800 5.800 4.400 4.400M10.200 5.800l-4.400 4.400" stroke="#fff" strokeWidth="2.200" strokeLinecap="square" />
    </svg>
  );
}

type User = { name: string; admin?: boolean; full?: string; group?: string; created: string; last: string; online: boolean };

const users: User[] = [
  { name: "admin", admin: true, full: "Administrator", created: "03-sep-2018", last: "Never logged in before.", online: false },
  { name: "bry2", created: "05-sep-2018", last: "Conectado", online: true },
  { name: "bryan", group: "GrupoPrueba1", created: "03-sep-2018", last: "Conectado", online: true },
  { name: "jair", created: "03-sep-2018", last: "Conectado", online: true },
  { name: "rocio", group: "GrupoPrueba1", created: "03-sep-2018", last: "Conectado", online: true },
];

function UsersTable() {
  return (
    <div className="border-x border-t border-[#c4c4c4] pr-px">
      <table className="w-full table-fixed border-separate border-spacing-0 text-left text-[13px] leading-4 text-[#333] [&_td]:h-[29px] [&_td]:border-b [&_td]:border-[#dedede] [&_td]:px-1.5 [&_th]:h-[25px] [&_th]:border-b [&_th]:border-[#c4c4c4] [&_th]:bg-[#ececec] [&_th]:px-1.5">
        <colgroup>
          <col className="w-[19px]" />
          <col className="w-[69px]" />
          <col className="w-[191px]" />
          <col className="w-[201px]" />
          <col className="w-[140px]" />
          <col className="w-[105px]" />
          <col />
          <col className="w-[44px]" />
          <col className="w-[45px]" />
        </colgroup>
        <thead className="text-[11px]">
          <tr>
            <th aria-label="Número" />
            <th className="text-center">Conectado</th>
            <th>Usuario</th>
            <th>Nombre</th>
            <th>Grupos</th>
            <th>Creado</th>
            <th>Última Salida</th>
            <th className="text-center">Editar</th>
            <th className="text-center">Borrar</th>
          </tr>
        </thead>
        <tbody>
          {users.map((u, i) => (
            <tr key={u.name} className="bg-white even:bg-[#fbfbfb]">
              <td>{i + 1}</td>
              <td>
                <Pawn online={u.online} />
              </td>
              <td>
                <span className="flex items-center gap-1">
                  <a href="#usuario" className={link}>
                    {u.name}
                  </a>
                  {u.admin && (
                    <svg className="size-4" viewBox="0 0 16 16" role="img" aria-label="Administrador">
                      <path d="m8 .6 2.100 4.900 5.500.7-4 3.600 1.500 5.800-5.100-2.400-5 2.400 1.500-5.800L.4 6.200l5.500-.7Z" fill="url(#gold)" stroke="#d09a1a" strokeWidth=".8" strokeLinejoin="round" />
                    </svg>
                  )}
                </span>
              </td>
              <td>{u.full}</td>
              <td>
                {u.group ? (
                  <a href="#grupo" className={link}>
                    {u.group}
                  </a>
                ) : (
                  <em>None</em>
                )}
              </td>
              <td>{u.created}</td>
              <td>{u.last}</td>
              <td>
                <a href="#editar" aria-label={`Editar ${u.name}`} className="flex justify-center">
                  <EditIcon />
                </a>
              </td>
              <td className="border-r border-[#c4c4c4]">
                <a href="#borrar" aria-label={`Borrar ${u.name}`} className="flex justify-center">
                  <DeleteIcon />
                </a>
              </td>
            </tr>
          ))}
        </tbody>
      </table>
    </div>
  );
}

function Console() {
  return (
    <div className="flex-1 bg-white font-['Liberation_Sans',Arial,sans-serif]">
      <div className="flex h-[76px] justify-between pt-2 pr-[15px] pl-2.5">
        <Logo />
        <p className="pt-[7px] text-right text-[11px] leading-[14px] text-[#999]">
          Openfire 4.2.3
          <br />
          Conectado como <b>admin</b> -{" "}
          <a href="#salir" className="font-bold text-[#e2650c] underline">
            Salir
          </a>
          <br />
          Clustering status - Disabled
        </p>
      </div>
      <MainNav />
      <SubNav />
      <div className="flex">
        <Sidebar />
        <main className="min-w-0 flex-1">
          <div className="-ml-1 h-2 border-b border-[#e1e1e1] bg-[#f9f9f9]" />
          <div className="pt-[17px] pr-[31px] pb-8 pl-8">
            <h2 className="text-[19px] leading-[22px] font-bold text-[#555]">Lista de Usuarios</h2>
            <section className="mt-[15px] border border-[#d9d9d9] bg-linear-to-b from-white to-[#f6f6f6] px-5 pt-[17px] pb-[18px]">
              <div className="mb-[11px] flex h-[18px] items-center text-[12px] text-[#333]">
                <label htmlFor="per-page">
                  Total de Usuarios: <b>5</b> -- Ordenados por Nombre de Usuario -- Usuarios por página:
                </label>
                <span className="relative ml-[3px] flex">
                  <select id="per-page" className="h-4 w-[46px] appearance-none rounded-[2px] border border-[#a3a3a3] bg-linear-to-b from-[#f4f4f4] to-[#dedede] pl-1 text-[11px] leading-3 text-black">
                    <option>100</option>
                  </select>
                  <svg className="pointer-events-none absolute top-[5px] right-[5px] h-1.5 w-[7px]" viewBox="0 0 7 6" aria-hidden="true">
                    <path d="M0 0h7L3.500 6Z" fill="#000" />
                  </svg>
                </span>
              </div>
              <UsersTable />
            </section>
          </div>
        </main>
      </div>
      <footer className="flex justify-between border-t border-[#d9d9d9] pt-[5px] pr-3 pl-2.5 text-[12px] leading-[14px] text-[#666]">
        <nav aria-label="Pie" className="flex gap-2">
          {sections.map((s, i) => (
            <span key={s} className="flex gap-2">
              {i > 0 && <span className="text-[#444]">|</span>}
              <a href="#pie" className={link}>
                {s}
              </a>
            </span>
          ))}
        </nav>
        <p>
          Built by{" "}
          <a href="#jive" className={link}>
            Jive Software
          </a>{" "}
          and the{" "}
          <a href="#ignite" className={link}>
            IgniteRealtime.org
          </a>{" "}
          community
        </p>
      </footer>
    </div>
  );
}

export default function App() {
  return (
    <div className="flex min-h-screen flex-col">
      <Defs />
      <SystemBar />
      <div className="flex flex-1">
        <aside className="flex w-[47px] shrink-0 flex-col gap-[5px] border-r border-[#2a2826] bg-[#3a1d08] pt-[5px] pb-[5px]">
          {launchers.map((l) => (
            <LauncherTile key={l.name} item={l} />
          ))}
          <div className="mt-auto">
            <LauncherTile item={trash} />
          </div>
        </aside>
        <div className="flex min-w-0 flex-1 flex-col">
          <div className={`${UI} border-b border-[#a9a9a9] bg-[#f2f2f2]`}>
            <TabStrip />
            <Toolbar />
            <BookmarksBar />
          </div>
          <Console />
        </div>
      </div>
    </div>
  );
}
